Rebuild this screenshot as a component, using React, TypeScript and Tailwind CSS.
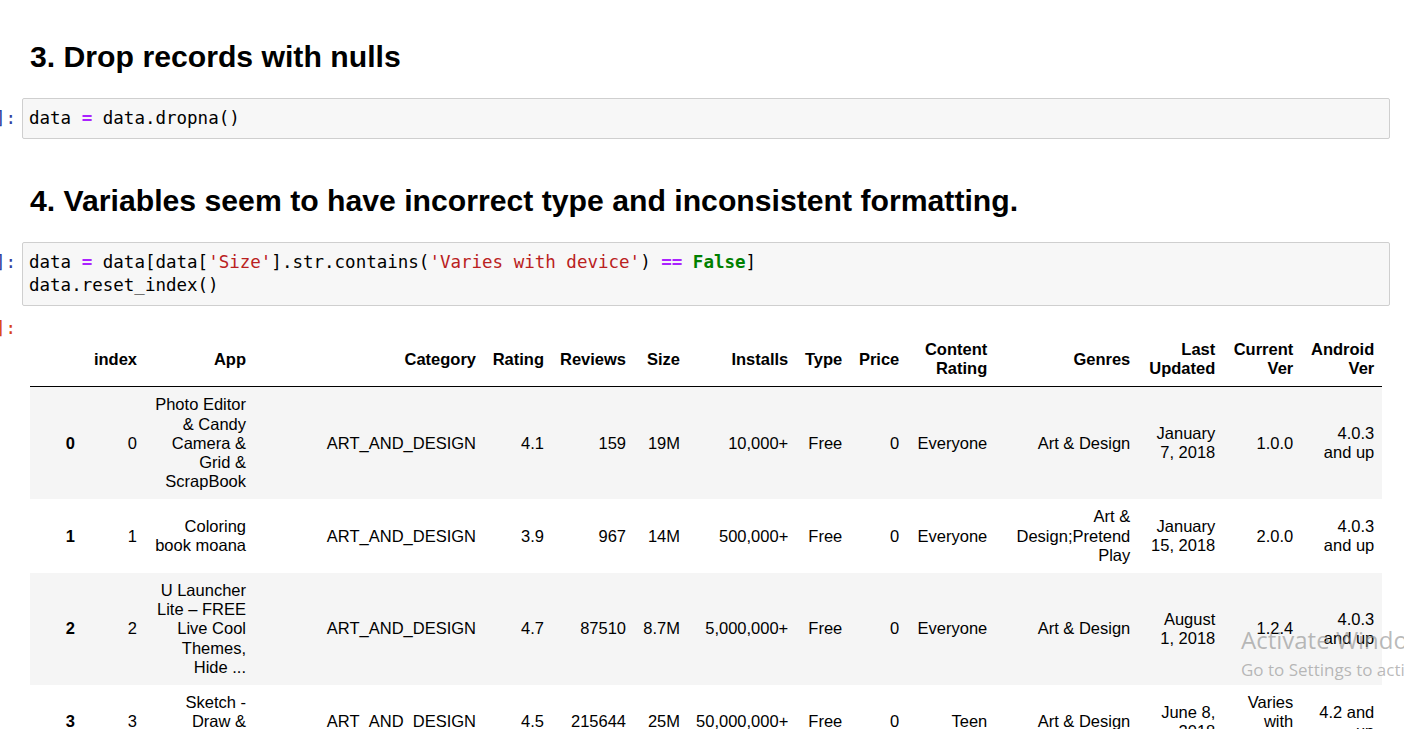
import React from "react";

const mono = "font-['DejaVu_Sans_Mono','Liberation_Mono',monospace]";

function Prompt() {
  return (
    <div className="relative w-[22px] shrink-0 overflow-hidden">
      <div className={`absolute right-[6px] top-[9px] whitespace-nowrap text-[17.5px] leading-[23px] text-[#303f9f] ${mono}`}>
        In [1]:
      </div>
    </div>
  );
}

function CodeCell({ children }: { children: React.ReactNode }) {
  return (
    <div className="flex">
      <Prompt />
      <div
        className={`w-[1368px] rounded-[2px] border border-[#cfcfcf] bg-[#f7f7f7] px-[6px] py-[8px] text-[17.5px] leading-[23px] text-black ${mono}`}
      >
        {children}
      </div>
    </div>
  );
}

const Op = ({ t }: { t: string }) => <span className="font-bold text-[#aa22ff]">{t}</span>;
const Str = ({ t }: { t: string }) => <span className="text-[#ba2121]">{t}</span>;

const widths = [53, 62, 109, 230, 68, 82, 54, 108, 54, 57, 88, 143, 85, 78, 81];

const headers = [
  "",
  "index",
  "App",
  "Category",
  "Rating",
  "Reviews",
  "Size",
  "Installs",
  "Type",
  "Price",
  "Content Rating",
  "Genres",
  "Last Updated",
  "Current Ver",
  "Android Ver",
];

const rows: string[][] = [
  ["0", "0", "Photo Editor & Candy Camera & Grid & ScrapBook", "ART_AND_DESIGN", "4.1", "159", "19M", "10,000+", "Free", "0", "Everyone", "Art & Design", "January 7, 2018", "1.0.0", "4.0.3 and up"],
  ["1", "1", "Coloring book moana", "ART_AND_DESIGN", "3.9", "967", "14M", "500,000+", "Free", "0", "Everyone", "Art & Design;Pretend Play", "January 15, 2018", "2.0.0", "4.0.3 and up"],
  ["2", "2", "U Launcher Lite – FREE Live Cool Themes, Hide ...", "ART_AND_DESIGN", "4.7", "87510", "8.7M", "5,000,000+", "Free", "0", "Everyone", "Art & Design", "August 1, 2018", "1.2.4", "4.0.3 and up"],
  ["3", "3", "Sketch - Draw & Paint", "ART_AND_DESIGN", "4.5", "215644", "25M", "50,000,000+", "Free", "0", "Teen", "Art & Design", "June 8, 2018", "Varies with device", "4.2 and up"],
];

function DataTable() {
  return (
    <table className="table-fixed border-collapse text-[16.5px] leading-[19.2px] text-black font-['Liberation_Sans',Arial,sans-serif]">
      <colgroup>
        {widths.map((w, i) => (
          <col key={i} style={{ width: w }} />
        ))}
      </colgroup>
      <thead>
        <tr className="border-b border-black">
          {headers.map((h, i) => (
            <th key={i} className="px-[8px] py-[8px] text-right align-middle font-bold">
              {h}
            </th>
          ))}
        </tr>
      </thead>
      <tbody>
        {rows.map((r, ri) => (
          <tr key={ri} className={ri % 2 === 0 ? "bg-[#f5f5f5]" : "bg-white"}>
            {r.map((c, ci) =>
              ci === 0 ? (
                <th key={ci} className="px-[8px] py-[8px] text-right align-middle font-bold">
                  {c}
                </th>
              ) : (
                <td key={ci} className="px-[8px] py-[8px] text-right align-middle">
                  {c}
                </td>
              )
            )}
          </tr>
        ))}
      </tbody>
    </table>
  );
}

export default function App() {
  return (
    <div className="relative h-[729px] w-[1404px] overflow-hidden bg-white">
      <div className="flex flex-col pt-[39px]">
        <h3 className="pl-[30px] text-[30.2px] font-bold leading-[36px] text-black font-['Liberation_Sans',Arial,sans-serif]">
          3. Drop records with nulls
        </h3>
        <div className="mt-[23px]">
          <CodeCell>
            <div>
              data <Op t="=" /> data.dropna()
            </div>
          </CodeCell>
        </div>
        <h3 className="mt-[44px] pl-[30px] text-[30.2px] font-bold leading-[36px] text-black font-['Liberation_Sans',Arial,sans-serif]">
          4. Variables seem to have incorrect type and inconsistent formatting.
        </h3>
        <div className="mt-[23px]">
          <CodeCell>
            <div>
              data <Op t="=" /> data[data[<Str t="'Size'" />].str.contains(<Str t="'Varies with device'" />){" "}
              <Op t="==" /> <span className="font-bold text-[#008000]">False</span>]
            </div>
            <div>data.reset_index()</div>
          </CodeCell>
        </div>
        <div className="mt-[11px] flex">
          <div className="relative w-[30px] shrink-0 overflow-hidden">
            <div className={`absolute right-[14px] top-0 whitespace-nowrap text-[17.5px] leading-[23px] text-[#d84315] ${mono}`}>
              Out[1]:
            </div>
          </div>
          <div className="mt-[15px]">
            <DataTable />
          </div>
        </div>
      </div>

      <div className="pointer-events-none absolute left-[1241px] top-[624px] whitespace-nowrap font-['Open_Sans','Noto_Sans',sans-serif] text-[#8c8c8c]/60">
        <div className="text-[24px] leading-[32px]">Activate Windows</div>
        <div className="mt-[2px] text-[17px] leading-[24px]">Go to Settings to activate Windows.</div>
      </div>
    </div>
  );
}
